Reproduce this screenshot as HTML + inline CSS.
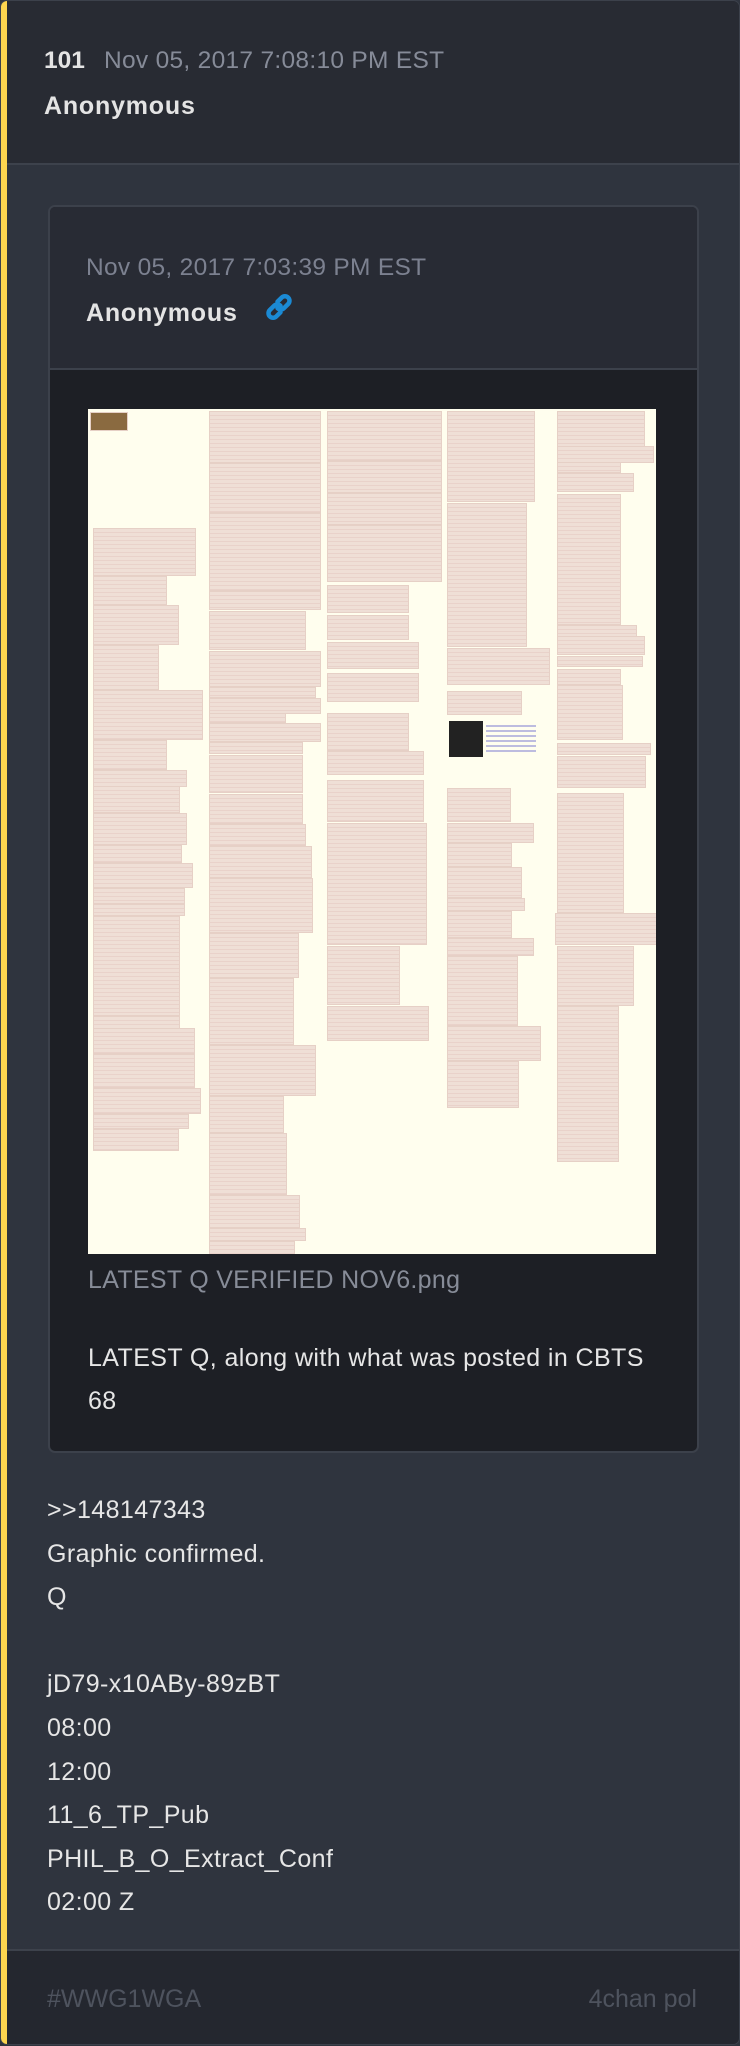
<!DOCTYPE html>
<html><head><meta charset="utf-8">
<style>
*{margin:0;padding:0;box-sizing:border-box}
html,body{width:740px;height:2046px;background:#2f343e;overflow:hidden}
body{font-family:"Liberation Sans",sans-serif;position:relative}
.card{position:absolute;left:0;top:0;width:740px;height:2045px;background:#2f343e;border:1px solid #3c414b;border-radius:7px;overflow:hidden}
.ybar{position:absolute;left:0;top:0;width:6px;height:2046px;background:#fdd54f}
.hdr{position:absolute;left:6px;top:0;right:0;height:164px;background:#282b33;border-bottom:2px solid #3d424c}
.t{position:absolute;white-space:nowrap}
.inner{position:absolute;left:47px;top:204px;width:651px;height:1248px;border:2px solid #3c414b;border-radius:7px;background:#1d1f25;overflow:hidden}
.ihdr{position:absolute;left:0;top:0;right:0;height:163px;background:#282b34;border-bottom:2px solid #3c414b}
.img{position:absolute;left:38px;top:202px;width:568px;height:845px;background:#fffeee;overflow:hidden}
.img div{position:absolute;background:#efdfd6 repeating-linear-gradient(180deg,transparent 0 3px,rgba(160,60,60,.08) 3px 4px);box-shadow:0 0 0 1px #e6d0c6}
.body{color:#e6e6e6;font-size:25px;letter-spacing:0.4px}
.ftr{position:absolute;left:6px;right:0;top:1948px;bottom:0;background:#24272f;border-top:2px solid #3d424c}
.date{font-size:24.5px;letter-spacing:0.3px}
.anon{font-size:25px;font-weight:bold;color:#e4e4e4;letter-spacing:0.8px}
</style></head><body>
<div class="card">
 <div class="hdr">
  <div class="t" style="left:37px;top:46px;font-size:24.5px;font-weight:bold;color:#e4e4e4">101</div>
  <div class="t date" style="left:97px;top:46px;color:#868b98">Nov 05, 2017 7:08:10 PM EST</div>
  <div class="t anon" style="left:37px;top:91px">Anonymous</div>
 </div>
 <div class="inner">
  <div class="ihdr">
   <div class="t date" style="left:36px;top:47px;color:#7c8190">Nov 05, 2017 7:03:39 PM EST</div>
   <div class="t anon" style="left:36px;top:92px">Anonymous</div>
   <svg style="position:absolute;left:211px;top:82px" width="36" height="36" viewBox="0 0 24 24"><g fill="none" stroke="#1b8ad4" stroke-width="3" stroke-linecap="round"><path d="M11 8.5l2.8-2.8a3 3 0 0 1 4.3 4.3l-2.8 2.8a3 3 0 0 1-4.3 0"/><path d="M13 15.5l-2.8 2.8a3 3 0 0 1-4.3-4.3l2.8-2.8a3 3 0 0 1 4.3 0"/></g></svg>
  </div>
  <div class="img">
   <div style="left:6px;top:120px;width:101px;height:46px"></div>
   <div style="left:6px;top:168px;width:72px;height:27px"></div>
   <div style="left:6px;top:197px;width:84px;height:38px"></div>
   <div style="left:6px;top:237px;width:64px;height:43px"></div>
   <div style="left:6px;top:282px;width:108px;height:48px"></div>
   <div style="left:6px;top:332px;width:72px;height:28px"></div>
   <div style="left:6px;top:362px;width:92px;height:15px"></div>
   <div style="left:6px;top:378px;width:85px;height:25px"></div>
   <div style="left:6px;top:405px;width:92px;height:30px"></div>
   <div style="left:6px;top:437px;width:87px;height:16px"></div>
   <div style="left:6px;top:455px;width:98px;height:23px"></div>
   <div style="left:6px;top:480px;width:90px;height:14px"></div>
   <div style="left:6px;top:496px;width:90px;height:10px"></div>
   <div style="left:6px;top:508px;width:85px;height:98px"></div>
   <div style="left:6px;top:608px;width:85px;height:11px"></div>
   <div style="left:6px;top:620px;width:100px;height:24px"></div>
   <div style="left:6px;top:646px;width:100px;height:32px"></div>
   <div style="left:6px;top:680px;width:106px;height:24px"></div>
   <div style="left:6px;top:706px;width:94px;height:13px"></div>
   <div style="left:6px;top:721px;width:84px;height:20px"></div>
   <div style="left:3px;top:4px;width:36px;height:17px;background:#8a6a40"></div>

   <div style="left:122px;top:3px;width:110px;height:50px"></div>
   <div style="left:122px;top:55px;width:110px;height:48px"></div>
   <div style="left:122px;top:105px;width:110px;height:76px"></div>
   <div style="left:122px;top:183px;width:110px;height:17px"></div>
   <div style="left:122px;top:203px;width:95px;height:37px"></div>
   <div style="left:122px;top:243px;width:110px;height:34px"></div>
   <div style="left:122px;top:279px;width:105px;height:9px"></div>
   <div style="left:122px;top:290px;width:110px;height:14px"></div>
   <div style="left:122px;top:305px;width:75px;height:8px"></div>
   <div style="left:122px;top:315px;width:110px;height:17px"></div>
   <div style="left:122px;top:334px;width:92px;height:10px"></div>
   <div style="left:122px;top:347px;width:92px;height:36px"></div>
   <div style="left:122px;top:386px;width:92px;height:28px"></div>
   <div style="left:122px;top:416px;width:95px;height:20px"></div>
   <div style="left:122px;top:438px;width:101px;height:30px"></div>
   <div style="left:122px;top:470px;width:102px;height:53px"></div>
   <div style="left:122px;top:525px;width:88px;height:43px"></div>
   <div style="left:122px;top:570px;width:83px;height:65px"></div>
   <div style="left:122px;top:637px;width:105px;height:49px"></div>
   <div style="left:122px;top:688px;width:73px;height:35px"></div>
   <div style="left:122px;top:725px;width:76px;height:60px"></div>
   <div style="left:122px;top:787px;width:89px;height:31px"></div>
   <div style="left:122px;top:820px;width:95px;height:11px"></div>
   <div style="left:122px;top:833px;width:84px;height:12px"></div>

   <div style="left:240px;top:3px;width:113px;height:48px"></div>
   <div style="left:240px;top:53px;width:113px;height:30px"></div>
   <div style="left:240px;top:85px;width:113px;height:30px"></div>
   <div style="left:240px;top:117px;width:113px;height:55px"></div>
   <div style="left:240px;top:177px;width:80px;height:26px"></div>
   <div style="left:240px;top:207px;width:80px;height:23px"></div>
   <div style="left:240px;top:234px;width:90px;height:25px"></div>
   <div style="left:240px;top:265px;width:90px;height:27px"></div>
   <div style="left:240px;top:305px;width:80px;height:36px"></div>
   <div style="left:240px;top:343px;width:95px;height:22px"></div>
   <div style="left:240px;top:372px;width:95px;height:40px"></div>
   <div style="left:240px;top:415px;width:98px;height:120px"></div>
   <div style="left:240px;top:538px;width:71px;height:57px"></div>
   <div style="left:240px;top:598px;width:100px;height:33px"></div>

   <div style="left:360px;top:3px;width:86px;height:89px"></div>
   <div style="left:360px;top:95px;width:78px;height:142px"></div>
   <div style="left:360px;top:240px;width:101px;height:35px"></div>
   <div style="left:360px;top:283px;width:73px;height:22px"></div>
   <div style="left:361px;top:312px;width:34px;height:36px;background:#222;box-shadow:none"></div>
   <div style="left:398px;top:313px;width:50px;height:30px;background:#fffeee repeating-linear-gradient(180deg,transparent 0 3px,rgba(90,90,200,.4) 3px 5px);box-shadow:none"></div>
   <div style="left:360px;top:380px;width:62px;height:32px"></div>
   <div style="left:360px;top:415px;width:85px;height:18px"></div>
   <div style="left:360px;top:435px;width:63px;height:22px"></div>
   <div style="left:360px;top:459px;width:73px;height:29px"></div>
   <div style="left:360px;top:490px;width:76px;height:11px"></div>
   <div style="left:360px;top:503px;width:63px;height:25px"></div>
   <div style="left:360px;top:530px;width:85px;height:16px"></div>
   <div style="left:360px;top:548px;width:69px;height:68px"></div>
   <div style="left:360px;top:618px;width:92px;height:33px"></div>
   <div style="left:360px;top:653px;width:70px;height:45px"></div>

   <div style="left:470px;top:3px;width:86px;height:34px"></div>
   <div style="left:470px;top:38px;width:95px;height:15px"></div>
   <div style="left:470px;top:54px;width:62px;height:9px"></div>
   <div style="left:470px;top:65px;width:75px;height:17px"></div>
   <div style="left:470px;top:86px;width:62px;height:129px"></div>
   <div style="left:470px;top:217px;width:78px;height:10px"></div>
   <div style="left:470px;top:228px;width:86px;height:17px"></div>
   <div style="left:470px;top:248px;width:84px;height:9px"></div>
   <div style="left:470px;top:261px;width:62px;height:14px"></div>
   <div style="left:470px;top:277px;width:64px;height:53px"></div>
   <div style="left:470px;top:335px;width:92px;height:10px"></div>
   <div style="left:470px;top:348px;width:87px;height:30px"></div>
   <div style="left:470px;top:385px;width:65px;height:118px"></div>
   <div style="left:468px;top:505px;width:100px;height:30px"></div>
   <div style="left:470px;top:538px;width:75px;height:58px"></div>
   <div style="left:470px;top:598px;width:60px;height:154px"></div>
  </div>
  <div class="t" style="left:38px;top:1059px;font-size:25px;color:#878c98;letter-spacing:0.3px">LATEST Q VERIFIED NOV6.png</div>
  <div class="t" style="left:38px;top:1130px;font-size:25px;color:#e6e6e6;line-height:43px;white-space:normal;width:590px;letter-spacing:0.4px">LATEST Q, along with what was posted in CBTS 68</div>
 </div>
 <div class="t body" style="left:46px;top:1488px;line-height:43.6px;white-space:pre">&gt;&gt;148147343
Graphic confirmed.
Q

jD79-x10ABy-89zBT
08:00
12:00
11_6_TP_Pub
PHIL_B_O_Extract_Conf
02:00 Z</div>
 <div class="ftr">
  <div class="t" style="left:40px;top:34px;font-size:25px;color:#4e535e">#WWG1WGA</div>
  <div class="t" style="right:42px;top:34px;font-size:25px;color:#4e535e">4chan pol</div>
 </div>
 <div class="ybar"></div>
</div>
</body></html>
